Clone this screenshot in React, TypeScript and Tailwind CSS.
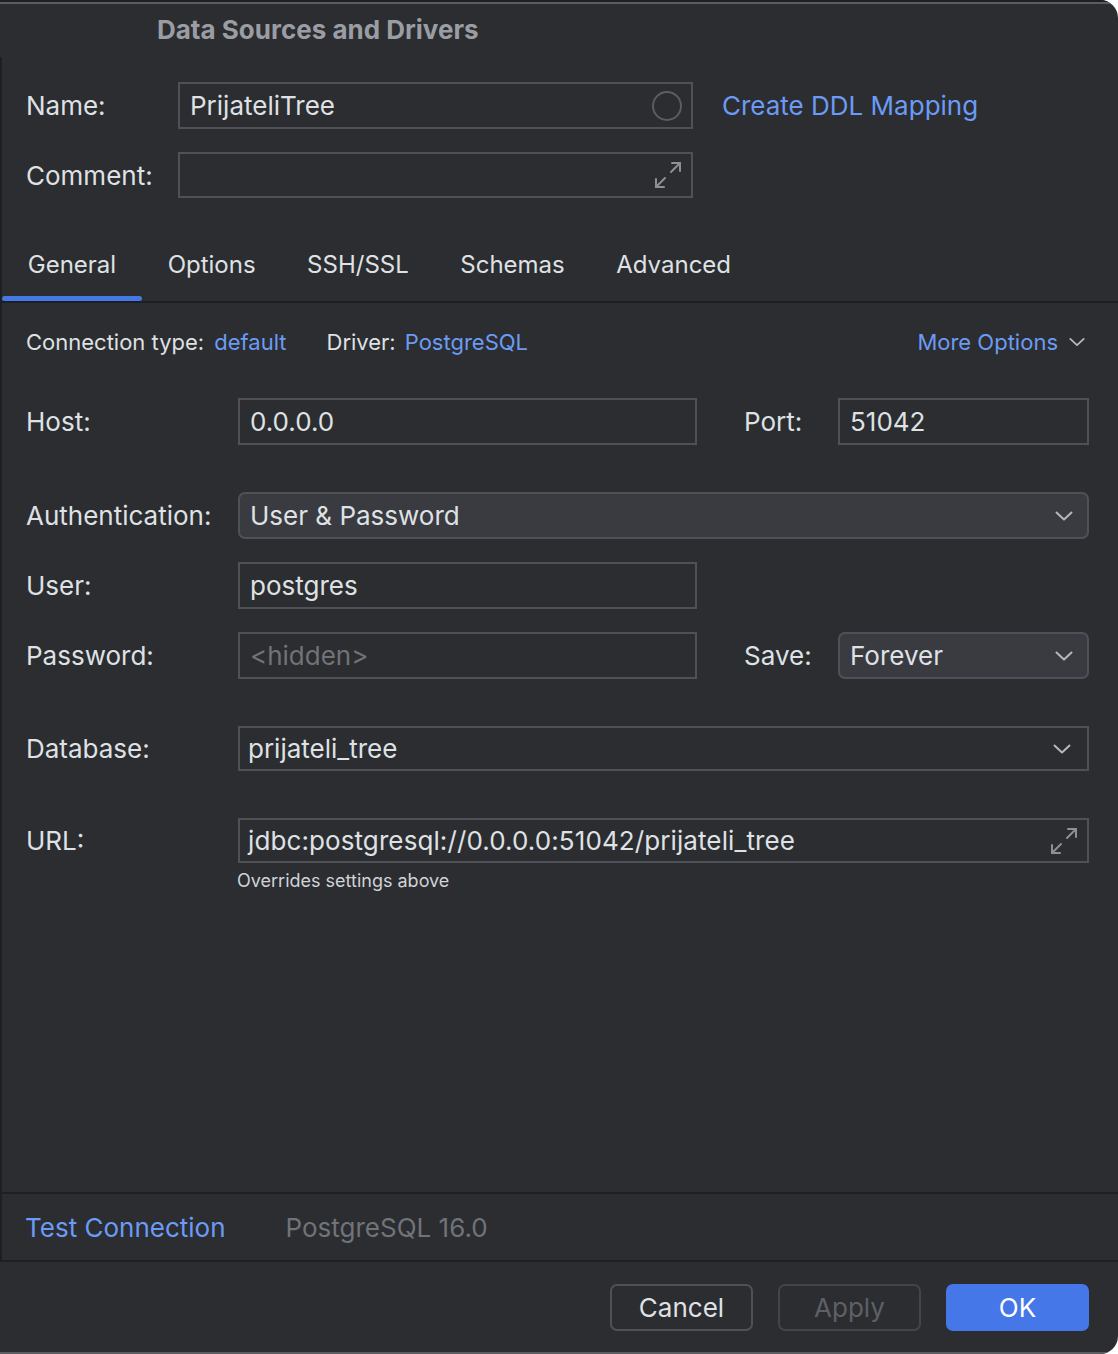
import React from 'react';

const font = { fontFamily: 'Inter, "Noto Sans", sans-serif' };

const Chevron = ({ className = '' }: { className?: string }) => (
  <svg width="18" height="10" viewBox="0 0 18 10" className={className} fill="none">
    <polyline points="1.5,1.5 9,8.5 16.5,1.5" stroke="#b4b8bf" strokeWidth="2" strokeLinecap="round" strokeLinejoin="round" />
  </svg>
);

const ExpandIcon = () => (
  <svg width="30" height="30" viewBox="0 0 30 30" fill="none">
    <g stroke="#8c9097" strokeWidth="2" strokeLinecap="round" strokeLinejoin="round">
      <line x1="18" y1="12" x2="27" y2="3" />
      <polyline points="19,3 27,3 27,11" />
      <line x1="12" y1="18" x2="3" y2="27" />
      <polyline points="3,19 3,27 11,27" />
    </g>
  </svg>
);

// plain bordered text field
const Field = ({
  value,
  placeholder,
  className = '',
  icon,
}: {
  value?: string;
  placeholder?: string;
  className?: string;
  icon?: React.ReactNode;
}) => (
  <div className={`flex items-center border-2 border-[#4e5157] pl-[10px] pr-[8px] ${className}`}>
    <span className={`flex-1 text-[26px] ${value ? 'text-[#dfe1e5]' : 'text-[#6f737a]'}`}>
      {value || placeholder}
    </span>
    {icon}
  </div>
);

const Select = ({ value, className = '' }: { value: string; className?: string }) => (
  <div className={`flex items-center rounded-[7px] border-2 border-[#4e5157] bg-[#393b40] pl-[10px] pr-[14px] ${className}`}>
    <span className="flex-1 text-[26px] text-[#dfe1e5]">{value}</span>
    <Chevron />
  </div>
);

const Label = ({ children, className = '' }: { children: React.ReactNode; className?: string }) => (
  <span className={`text-[26px] text-[#dfe1e5] ${className}`}>{children}</span>
);

const tabs = ['General', 'Options', 'SSH/SSL', 'Schemas', 'Advanced'];

export default function App() {
  return (
    <div style={font} className="w-[1118px] h-[1354px] bg-[#2b2d30] flex flex-col overflow-hidden rounded-tr-[18px] rounded-br-[18px]">
      {/* window top edge */}
      <div className="h-[2px] bg-[#1e1f22]" />
      <div className="h-[2px] bg-[#5b5d61] rounded-tr-[18px]" />

      {/* title */}
      <div className="h-[56px] flex items-center pl-[157px] -mt-[3px]">
        <span className="text-[26px] font-bold text-[#9a9da3]">Data Sources and Drivers</span>
      </div>

      {/* main content */}
      <div className="flex-1 flex flex-col border-l-2 border-[#1e1f22] border-b-2">
        <div className="mt-[25px] h-[47px] flex items-center">
          <Label className="w-[176px] pl-[24px]">Name:</Label>
          <Field
            value="PrijateliTree"
            className="w-[515px] h-[47px]"
            icon={
              <svg width="32" height="32" viewBox="0 0 32 32" fill="none">
                <circle cx="16" cy="16" r="14" stroke="#5a5d63" strokeWidth="2" />
              </svg>
            }
          />
          <span className="ml-[29px] text-[26px] text-[#6b9bf5]">Create DDL Mapping</span>
        </div>

        <div className="mt-[23px] h-[46px] flex items-center">
          <Label className="w-[176px] pl-[24px]">Comment:</Label>
          <Field className="w-[515px] h-[46px]" icon={<ExpandIcon />} />
        </div>

        {/* tabs */}
        <div className="mt-[30px] flex">
          {tabs.map((t, i) => (
            <div key={t} className="flex flex-col">
              <div className="h-[68px] flex items-center pt-[6px] px-[25.75px] text-[24px] text-[#dfe1e5]">{t}</div>
              <div className={`h-[5px] rounded-full ${i === 0 ? 'bg-[#4279e4]' : ''}`} />
            </div>
          ))}
        </div>
        <div className="h-[2px] bg-[#1e1f22]" />

        {/* connection info */}
        <div className="mt-[17px] h-[44px] flex items-center pl-[24px] pr-[32px] text-[22px]">
          <span className="text-[#dfe1e5]">Connection type:</span>
          <span className="ml-[10px] text-[#6b9bf5]">default</span>
          <span className="ml-[40px] text-[#dfe1e5]">Driver:</span>
          <span className="ml-[9px] text-[#6b9bf5]">PostgreSQL</span>
          <span className="ml-auto text-[#6b9bf5]">More Options</span>
          <Chevron className="ml-[10px] scale-90" />
        </div>

        <div className="mt-[34px] h-[47px] flex items-center">
          <Label className="w-[236px] pl-[24px]">Host:</Label>
          <Field value="0.0.0.0" className="w-[459px] h-[47px]" />
          <Label className="w-[141px] pl-[47px]">Port:</Label>
          <Field value="51042" className="w-[251px] h-[47px]" />
        </div>

        <div className="mt-[47px] h-[47px] flex items-center">
          <Label className="w-[236px] pl-[24px]">Authentication:</Label>
          <Select value="User & Password" className="w-[851px] h-[47px]" />
        </div>

        <div className="mt-[23px] h-[47px] flex items-center">
          <Label className="w-[236px] pl-[24px]">User:</Label>
          <Field value="postgres" className="w-[459px] h-[47px]" />
        </div>

        <div className="mt-[23px] h-[47px] flex items-center">
          <Label className="w-[236px] pl-[24px]">Password:</Label>
          <Field placeholder="<hidden>" className="w-[459px] h-[47px]" />
          <Label className="w-[141px] pl-[47px]">Save:</Label>
          <Select value="Forever" className="w-[251px] h-[47px]" />
        </div>

        <div className="mt-[47px] h-[45px] flex items-center">
          <Label className="w-[236px] pl-[24px]">Database:</Label>
          <div className="w-[851px] h-[45px] flex items-center border-2 border-[#4e5157] pl-[8px] pr-[16px]">
            <span className="flex-1 text-[26px] text-[#dfe1e5]">prijateli_tree</span>
            <Chevron />
          </div>
        </div>

        <div className="mt-[47px] h-[45px] flex items-center">
          <Label className="w-[236px] pl-[24px]">URL:</Label>
          <div className="w-[851px] h-[45px] flex items-center border-2 border-[#4e5157] pl-[8px] pr-[8px]">
            <span className="flex-1 text-[26px] tracking-[0.1px] text-[#dfe1e5]">jdbc:postgresql://0.0.0.0:51042/prijateli_tree</span>
            <ExpandIcon />
          </div>
        </div>
        <div className="mt-[6px] h-[24px] pl-[235px] text-[18px] leading-[24px] text-[#d0d3d8]">Overrides settings above</div>

        <div className="flex-1" />
        <div className="h-[2px] bg-[#1e1f22]" />
        <div className="h-[66px] flex items-center pl-[23px] text-[26px]">
          <span className="text-[#6b9bf5]">Test Connection</span>
          <span className="ml-[60px] text-[#6f737a]">PostgreSQL 16.0</span>
        </div>
      </div>

      {/* buttons */}
      <div className="h-[92px] flex pt-[22px] pr-[29px] justify-end gap-[25px] border-b-2 border-[#5b5d61]">
        <div className="w-[143px] h-[47px] rounded-[7px] border-2 border-[#4e5157] flex items-center justify-center text-[26px] text-[#dfe1e5]">Cancel</div>
        <div className="w-[143px] h-[47px] rounded-[7px] border-2 border-[#43454a] flex items-center justify-center text-[26px] text-[#5d6066]">Apply</div>
        <div className="w-[143px] h-[47px] rounded-[7px] bg-[#4677e8] flex items-center justify-center text-[26px] text-white">OK</div>
      </div>
    </div>
  );
}
